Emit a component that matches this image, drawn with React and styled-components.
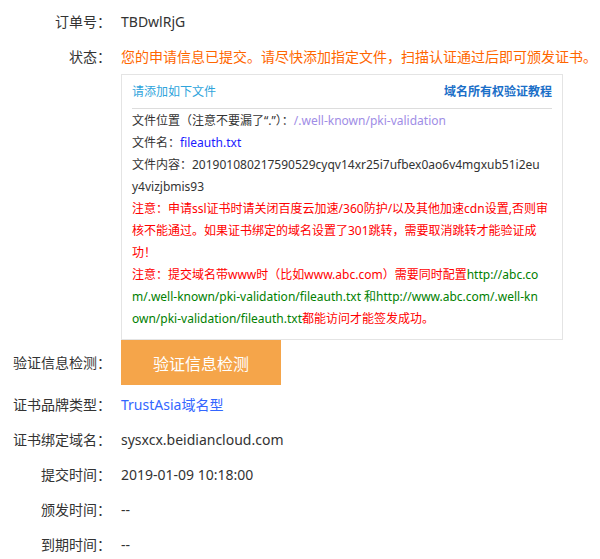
import React from "react";
import styled, { createGlobalStyle } from "styled-components";

const GlobalStyle = createGlobalStyle`
  body {
    margin: 0;
    background: #fff;
    color: #333;
    font-family: "Noto Sans", "Noto Sans CJK SC", sans-serif;
  }
`;

const Page = styled.div`
  padding-top: 4px;
  width: 600px;
`;

const Row = styled.div`
  display: flex;
  align-items: flex-start;
  margin-bottom: ${(p) => p.gap || 0}px;
`;

const Label = styled.div`
  width: 111px;
  flex-shrink: 0;
  text-align: right;
  font-size: 14px;
  line-height: ${(p) => p.h || 35}px;
  color: #333;
  white-space: nowrap;
`;

const Value = styled.div`
  margin-left: 10px;
  font-size: 14px;
  line-height: 35px;
  color: ${(p) => p.color || "#333"};
  white-space: nowrap;
`;

const Column = styled.div`
  margin-left: 10px;
  display: flex;
  flex-direction: column;
`;

const Status = styled.div`
  font-size: 14px;
  line-height: 35px;
  color: #ff6600;
  white-space: nowrap;
`;

const Box = styled.div`
  box-sizing: border-box;
  width: 442px;
  border: 1px solid #e4e4e4;
  padding: 0 10px 9px 10px;
`;

const BoxHeader = styled.div`
  display: flex;
  justify-content: space-between;
  padding: 6px 0 5px;
  line-height: 22px;
  font-size: 12px;
  border-bottom: 1px solid #ddd;
`;

const HeaderTitle = styled.span`
  color: #2ea4dc;
`;

const HeaderLink = styled.a`
  color: #1b6fc8;
  font-weight: bold;
  text-decoration: none;
`;

const BoxBody = styled.div`
  padding-top: 1px;
  font-size: 12px;
  line-height: 22px;
  color: #333;
  white-space: nowrap;
`;

const Line = styled.div`
  color: ${(p) => p.color || "inherit"};
`;

const Tone = styled.span`
  color: ${(p) => p.color};
`;

const CheckButton = styled.button`
  width: 160px;
  height: 45px;
  border: none;
  background: #f5a54a;
  color: #fff;
  font-family: inherit;
  font-size: 16px;
  cursor: pointer;
`;

const RED = "#ff0000";
const GREEN = "#008000";

export default function App() {
  return (
    <Page>
      <GlobalStyle />
      <Row>
        <Label>订单号：</Label>
        <Value>TBDwlRjG</Value>
      </Row>
      <Row>
        <Label>状态：</Label>
        <Column>
          <Status>您的申请信息已提交。请尽快添加指定文件，扫描认证通过后即可颁发证书。</Status>
          <Box>
            <BoxHeader>
              <HeaderTitle>请添加如下文件</HeaderTitle>
              <HeaderLink href="#">域名所有权验证教程</HeaderLink>
            </BoxHeader>
            <BoxBody>
              <Line>
                文件位置（注意不要漏了“.”）：<Tone color="#a08de6">/.well-known/pki-validation</Tone>
              </Line>
              <Line>
                文件名：<Tone color="#1a1aff">fileauth.txt</Tone>
              </Line>
              <Line>文件内容：201901080217590529cyqv14xr25i7ufbex0ao6v4mgxub51i2eu</Line>
              <Line>y4vizjbmis93</Line>
              <Line color={RED}>注意：申请ssl证书时请关闭百度云加速/360防护/以及其他加速cdn设置,否则审</Line>
              <Line color={RED}>核不能通过。如果证书绑定的域名设置了301跳转，需要取消跳转才能验证成</Line>
              <Line color={RED}>功！</Line>
              <Line color={RED}>
                注意：提交域名带www时（比如www.abc.com）需要同时配置<Tone color={GREEN}>http://abc.co</Tone>
              </Line>
              <Line color={GREEN}>m/.well-known/pki-validation/fileauth.txt 和http://www.abc.com/.well-kn</Line>
              <Line>
                <Tone color={GREEN}>own/pki-validation/fileauth.txt</Tone>
                <Tone color={RED}>都能访问才能签发成功。</Tone>
              </Line>
            </BoxBody>
          </Box>
        </Column>
      </Row>
      <Row gap={2}>
        <Label h={45}>验证信息检测：</Label>
        <Column>
          <CheckButton>验证信息检测</CheckButton>
        </Column>
      </Row>
      <Row>
        <Label>证书品牌类型：</Label>
        <Value color="#3366ff">TrustAsia域名型</Value>
      </Row>
      <Row>
        <Label>证书绑定域名：</Label>
        <Value>sysxcx.beidiancloud.com</Value>
      </Row>
      <Row>
        <Label>提交时间：</Label>
        <Value>2019-01-09 10:18:00</Value>
      </Row>
      <Row>
        <Label>颁发时间：</Label>
        <Value>--</Value>
      </Row>
      <Row>
        <Label>到期时间：</Label>
        <Value>--</Value>
      </Row>
    </Page>
  );
}
